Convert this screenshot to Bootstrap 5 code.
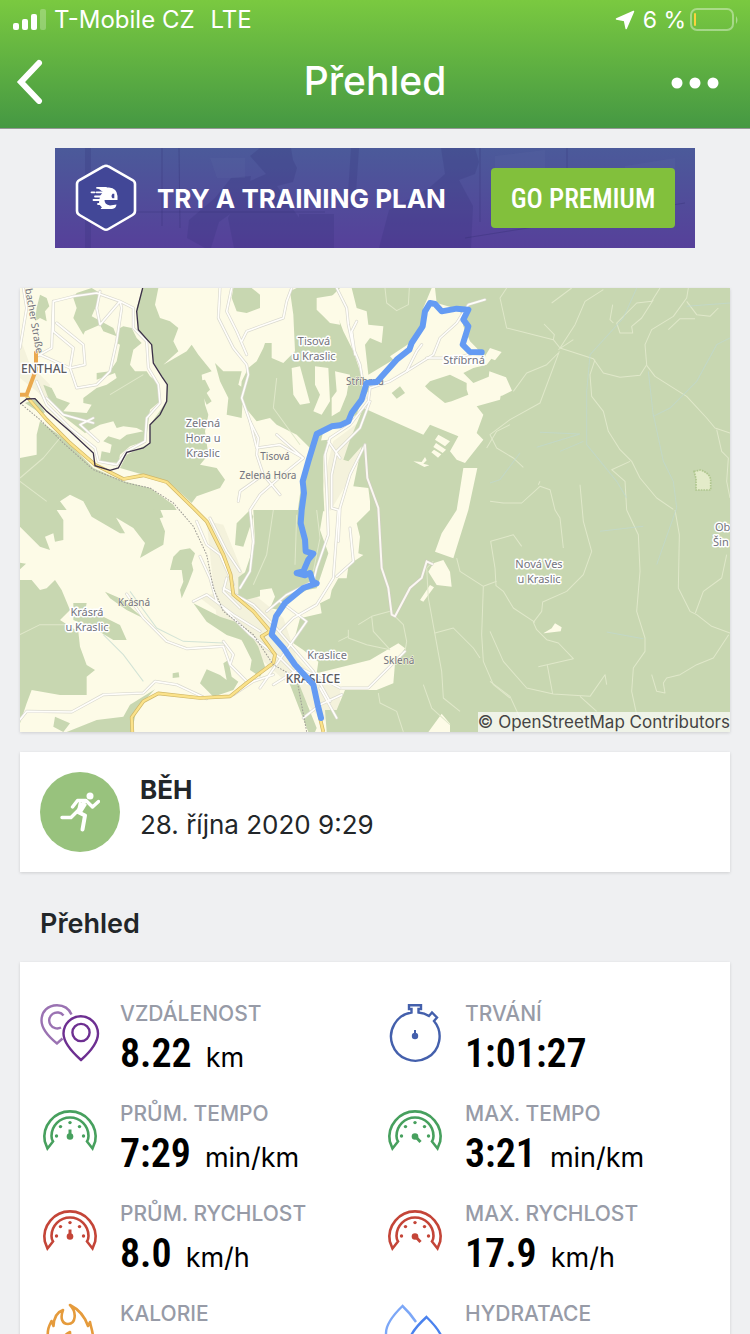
<!DOCTYPE html>
<html lang="cs">
<head>
<meta charset="utf-8">
<meta name="viewport" content="width=device-width, initial-scale=1">
<title>Přehled</title>
<link href="https://cdn.jsdelivr.net/npm/bootstrap@5.3.0/dist/css/bootstrap.min.css" rel="stylesheet">
<style>
body{font-family:Inter,"Noto Sans",sans-serif;background:#eff0f2;color:#222629}
.app-header{background:linear-gradient(#7ac940,#459843);border-bottom:1px solid #949896;color:#fff}
.status-bar{height:40px;font-size:24px;line-height:42px;padding:0 12px}
.status-end{font-size:23px}
.nav-row{height:88px;padding:0 28px 6px 16px}
.nav-title{font-size:39px;line-height:48px;font-weight:500}
.icon-btn{background:none;border:0;padding:0;color:#fff;line-height:0}
.side{width:52px}
.side-back{width:64px}
.scroll-area{scrollbar-width:none}
.scroll-area::-webkit-scrollbar{display:none}
.promo{max-width:640px;height:100px;background:linear-gradient(#4b5a9a,#56409a);overflow:hidden}
.promo-art{inset:0;width:100%;height:100%}
.promo-text{font-size:26px;line-height:42px;font-weight:700;color:#fff;margin-left:20px;padding-top:2px}
.btn-premium{background:#82c03c;color:#fff;border:0;border-radius:4px;width:184px;height:60px;padding:2px 0 0;font:500 27px/58px "Roboto Condensed","Liberation Sans Narrow",Roboto,sans-serif}
.btn-premium:hover{background:#75b030;color:#fff}
.panel{background:#fff;box-shadow:0 1px 3px rgba(0,0,0,.14)}
.map-panel svg{display:block;width:100%;height:auto}
.attribution{right:0;bottom:0;background:rgba(255,255,255,.7);font-size:17px;line-height:20px;color:#444}
.sport-dot{width:80px;height:80px;background:#98c27d}
.sport-title{font-size:26px;line-height:35px;font-weight:700}
.sport-date{font-size:26px;line-height:35px}
.section-title{font-size:27px;line-height:36px;font-weight:600}
.metric{height:100px;gap:20px}
.metric svg{width:60px;height:64px;flex:none;overflow:visible}
.metric dt{font-size:21px;line-height:28px;font-weight:500;color:#979ba7}
.metric dd{color:#000;line-height:52px}
.metric b{font:600 40px/52px "Roboto Condensed","Liberation Sans Narrow",Roboto,sans-serif}
.metric span{font-size:27px;margin-left:14px}
.lbl{font-family:"Noto Sans",sans-serif;fill:#73737d;stroke:#fff;stroke-width:3px;stroke-linejoin:round;paint-order:stroke;text-anchor:middle}
.l11{font-size:11px}.l10{font-size:10px}.l12{font-size:12px;font-weight:500;fill:#5c5c60}
.l-start{text-anchor:start}
.bare{stroke:#fdfbe7;stroke-width:1px}
</style>
</head>
<body>
<div class="vh-100 d-flex flex-column">
<header class="app-header flex-shrink-0">
  <div class="status-bar d-flex align-items-center justify-content-between">
    <div class="d-flex align-items-center">
      <svg width="34" height="22" viewBox="0 0 34 22" fill="#fff" aria-hidden="true"><rect x="1" y="14" width="6" height="7" rx="2"/><rect x="10" y="10" width="6" height="11" rx="2"/><rect x="19" y="5" width="6" height="16" rx="2"/><rect x="28" y="0" width="6" height="21" rx="2" opacity=".25"/></svg>
      <span class="ms-2">T-Mobile CZ</span><span class="ms-3">LTE</span>
    </div>
    <div class="status-end d-flex align-items-center">
      <svg width="20" height="20" viewBox="0 0 20 20" aria-hidden="true"><path d="M18.500 1.500 1.500 9 9.500 10.500 11.200 18.500Z" fill="#fff" stroke="#fff" stroke-width="1.500" stroke-linejoin="round"/></svg>
      <span class="ms-2 me-1">6 %</span>
      <svg width="48" height="24" viewBox="0 0 48 24" aria-hidden="true"><rect x="1" y="1" width="42" height="21" rx="6" fill="none" stroke="#fff" stroke-opacity=".38" stroke-width="2"/><path d="M46 8q3 4 0 8Z" fill="#fff" opacity=".4"/><rect x="4" y="5" width="2" height="13" rx="1" fill="#fbd33c"/></svg>
    </div>
  </div>
  <nav class="nav-row d-flex align-items-center justify-content-between" aria-label="Navigace">
    <div class="side-back"><button class="icon-btn" type="button" aria-label="Zpět"><svg width="28" height="46" viewBox="0 0 28 46"><path d="M23 6 5 25 23 44" fill="none" stroke="#fff" stroke-width="6" stroke-linecap="round" stroke-linejoin="miter" transform="translate(0 -1)"/></svg></button></div>
    <h1 class="nav-title m-0">Přehled</h1>
    <div class="side text-end"><button class="icon-btn" type="button" aria-label="Další možnosti"><svg width="52" height="14" viewBox="0 0 52 14" fill="#fff"><circle cx="7" cy="7" r="5.500"/><circle cx="25" cy="7" r="5.500"/><circle cx="43" cy="7" r="5.500"/></svg></button></div>
  </nav>
</header>

<main class="scroll-area flex-grow-1 overflow-auto px-3">
<div class="px-1">
  <section class="promo position-relative mx-auto d-flex align-items-center justify-content-between" style="margin-top:19px">
    <svg class="promo-art position-absolute" viewBox="0 0 640 100" preserveAspectRatio="none" aria-hidden="true">
      <g fill="#2c2a72" opacity=".18"><path d="M195 8 205 0h31l2 12 4 8-4 14-16 4 8 12 20 28-6 22h-65l-6-30 20-36 18-8Z"/><path d="m150 100-18-10 2-18 26-22 16-20 20-2-4 26-28 20-8 26Z"/><path d="M386 0h34l4 14-4 12-16 6 14 26-2 42h-92l10-38 40-22 16-14Z"/><path d="M30 0h6v100h-6ZM244 66h35v34h-35ZM296 0h8l-4 60h-8Z"/></g>
      <g fill="none" stroke="#2d2a6c" opacity=".3"><path d="M107 0v78M124 0l1 80M20 64h250M425 0v74M512 0v20M410 90l220-35"/></g>
      <g fill="#6673a6" opacity=".16"><path d="M155 10h35v20h-28ZM440 8l50-6v30h-50ZM570 18l50-8v40h-50Z"/></g>
    </svg>
    <div class="position-relative d-flex align-items-center">
      <svg width="62" height="70" viewBox="0 0 62 70" style="margin-left:20px" aria-hidden="true">
        <path d="M28.500 3.500q2.500-1.500 5 0l24 13.500q2.500 1.500 2.500 4v27q0 2.500-2.500 4l-24 14q-2.500 1.500-5 0l-24-14q-2.500-1.500-2.500-4V21q0-2.500 2.500-4Z" fill="#424797" stroke="#fff" stroke-width="2.600"/>
        <path d="M22 24.500H34Q42 25 42.500 33V37H29.500Q29.500 41.500 35 42.500L41.500 41.500Q41 45.500 37 46H26Q25 45 27 44.500 24 42 24 39.500L25 33 28 29Z" fill="#fff"/>
        <path d="M22 24.800h9M16.500 29.300h3M21.500 29.300h9M20 33.500h9M18.500 37h9M23 41h6" fill="none" stroke="#fff" stroke-width="1.800" stroke-linecap="round"/>
        <path d="M37.500 30.800h1.800v4.500h-1.800q-2-2.200 0-4.500Z" fill="#424797"/>
      </svg>
      <span class="promo-text">TRY A TRAINING PLAN</span>
    </div>
    <button class="btn btn-premium position-relative" style="margin-right:20px" type="button">GO PREMIUM</button>
  </section>

  <figure class="panel map-panel position-relative mb-0 overflow-hidden" style="margin-top:40px">
  <svg viewBox="0 0 710 444" role="img" aria-label="Mapa trasy">
    <rect width="710" height="444" fill="#fdfbe7"/>
    <g transform="scale(.33334)">
    <defs>
      <g id="roads">
        <path d="M10 0 20 60 0 180M100 40 95 180 50 205M240 10 230 60 240 110 300 40 230 15 160 25 100 40 100 130 160 180 150 240 60 200M110 105 190 170 195 230 150 240 170 300 230 290 270 250 290 160 305 60 300 40 340 60 340 120 380 160 385 240 415 290 420 345 380 390 375 460 320 490 290 530 235 520 225 480 150 420 80 350 50 280"/>
        <path d="M220 405 130 380 80 330M235 460 180 410 220 390M600 0 595 90 640 180 680 230 685 260 665 330 690 400 715 450 710 500 730 560 660 610 655 640M635 0 620 70 650 130 680 200M665 160 680 130 720 115 790 90 800 40 815 0"/>
        <path d="M950 0 980 60 985 110 1000 180 1020 230 1030 290 1035 330M1005 200 995 130 1010 100M1395 35 1345 50 1310 105 1260 150 1240 200 1160 250 1110 280 1050 300 1045 340 990 410 930 450 915 500 920 600 925 740 890 840 880 880 800 920 740 970"/>
        <path d="M1160 250 1190 190 1205 170M1050 340 1020 420 950 490 935 560 935 660 955 666 940 870 890 950 820 990 780 1030M925 460 960 510M1220 210 1310 210 1380 190"/>
        <path d="M1035 470 990 560 960 660 955 760M690 400 710 480 780 470 850 510 800 550 720 620 690 666 700 760 690 850 660 900M770 440 850 510M730 560 780 620M950 865 1000 820 990 720"/>
        <path d="M0 1295 20 1270 155 1272 250 1220 370 1215 405 1180 470 1190 560 1232M320 918 370 990 440 1060 500 1082 610 1075 630 1130 680 1180M610 1060 640 1100 630 1130"/>
        <path d="M530 700 560 770 600 800 640 890M570 690 620 790 660 850M540 805 570 870 590 940 690 1040 780 1110 850 1180M520 940 560 920 640 980 720 1030M610 900 700 950 760 1010 820 1080 880 1150 930 1240M660 960 610 910 620 870M780 940 860 1000 720 1200M760 1190 840 1140 960 1200M850 1290 900 1250 965 1220M900 1200 950 1290"/>
        <path d="M965 1200 1045 1200 1155 1090M640 1220 700 1180 760 1160"/>
      </g>
      <g id="yellow"><path d="M20 325 80 395 150 465 225 530 310 573 370 562 440 582 520 660 560 700 610 800 632 860 640 920 700 970 755 1035 825 1130 880 1190 900 1290 910 1332"/><path d="M337 1332 335 1288 370 1240 415 1216 540 1230 630 1225 680 1185 760 1125 765 1100 725 1045 750 1030"/></g>
    </defs>
    <path d="m0 150 30 80 60 60-10 50-30-30-50-40Zm560 550 50 10 80 200 100 80 40 120 50 50 50 60-40 60-50-60-120-110-130-120Zm380-240 80-60 20 60-50 110-60 100-20-90ZM540 930l60-20 20 80ZM880 1180l80 20 0 60-50 40Z" fill="#f0edd5" opacity=".65"/>
    <g fill="#c8d7b1">
      <path d="m60 20 20 10 8 25-13 15 5 30-20-10-15 10 5-40ZM170 15l45-15 25 15-10 35-15 35 65 35 10 25-40-15-10-20-45 20-5 10-30-50 10-30-10-30Z"/>
      <path d="m310 115 25 5 15 30 15 15-25 20-10 45 15 20h35l10 15 25 20 5 55-30 25-10 75-5 20-45 15-30 25-5 25-55-5 5-30 25 5 5-25-25-10 15-15 35 10 20-15 50-10-20-10-40-5-20 5-10-20-40 10-45 25-65-50-20-20-25-35-15-40 25 10 15 30 40 15-20 25 70 5 15-25-25-5v-15l40-30 30-10 30-20-5-15-55 20v-20l40-5 20-30 10-50-10-5 10-45Z"/>
      <path d="m368 0h47l-10 50 15 40 30 10 25 20-15 40 15 30-45 40 70-40 15-20 20 30 40 50-30 10 10 90 10 30-10 50 10 70-25 30 50 10 25 35-15 25-70 25-15 20-55-50-30-20-60-15-70-20 20-40 70-35v-55l50-70v-55l-40-60-5-55-40-45-5-65Z"/>
      <path d="m585 225 25 25h55l-10 40 15 10-5 90-45-10 5-50-25-50ZM640 0h55l25 20v40l-40 15-30-5-15-40ZM530 280l25-5 15 30-10 10 15 25-15 10ZM15 345l35-12 25 40-10 5Z"/>
      <path d="m60 400 70 50 90 90 90 40 80 20 70 50 10 16H240l-50-26-40-20-30 20 20 26-30 0 20 30 0 60-25 5-5-25-25 10 15 40-30-10-60-60V510l50-10V440Z"/>
      <path d="M190 640h70l55 96h-15l-85-50ZM240 660h160l15 20 20 50-5 40-35 20-35 20 15-45-35-45Z"/>
      <path d="m0 876 35-0 25 30 20-5 25-25 20 30 25 60-30 30 55 35 5 45 20 55 25 15-25 20v55h-80l-85-15-15 40-20 60ZM0 824l18 3-18 17ZM480 786l30-5 15 15-10 30 5 20-15 40-20 45-5-25 10-25-5-35h-35l10-40ZM520 946l80 40 60 20 30 30 25 40 20 60-15 30-30-20 5-30-30-60-45-15-60-40ZM255 911l45 20 70 60-50-25-50-35ZM160 945l40 0-4 20 54 21 50 25 20 45h-40l-50-30-70-30ZM560 1144l40 17 20 15-10-50 15-10 10 50 20 15-15 25-60 20-40-40ZM405 1204l-55 60-15 68H140l0 0 90-36 80-10 20-36ZM105 1286l45 20-20 26-30-16ZM650 706l40-40 10 20-30 90-25-5ZM400 666l20-3 10 25-20 5ZM458 1156l18-3 2 15-20 2Z"/>
      <path d="m710 220 20-40 5-15h20v45l35 15 35-35-5-110-10-70 20-10h130l-40 40 20 50 15 0 15 40 30 60 20 60 30 50-30 50-10 30-100 50-10 40-30 10-40-40-60-30-20-20-40 10-50-60 5-60 20-40ZM995 0h240l-25 60-10 70-30 35-60 40 10 10-75 45-10-90 15-20 35 15 5-50-45-5-5-40-30-10Z"/>
      <path d="M1245 0H2130V1332H920l-5-66 35 0 25-60 95 0 50-20 5-60 30-45-20-15-85 50-160 40 5-35-45-35-30-20 20-75 65-15-5-30 30-15 5-25 20-35 25 0 5-35 15-15 30-20-15-5 5-50-10-40 40-40v-26l-5-40-45-5 25-120-40 45-15-5 20-60 40-95 180 80 20-30 85 35-25 45 20 25 25 10 55-70-20-20 20-55-20-25 70-20 5-30-35-40-50 20-30-30 30-15 40-10 20-25h-30l-20-25-20-20-20-45-10-50-70-20Z"/>
      <path d="M715 666h195l-10 60 25 70-35 105-30 5-50 30-30 30-30-5 15-35-10-25-35 5-65 22 0-60 20-15 30-90-5-97ZM875 460l50-5-15 50v100l3 65h-80l15-110ZM1230 280l60-20 50 25 0 20 5 15-50 20-20 5-50-40-10-10ZM1115 315l25-20 15 20-25 17ZM810 1190l20-20 60 150-5 12h-20ZM645 925l75-50 0 50-40 10Z"/>
    </g>
    <g fill="#fdfbe7">
      <path d="M1330 540h42l-27 126-45 145-55-20 20-55 45-70ZM1240 826l30-10 20 35 5 45-45-5-25-40ZM1230 891l12 7-32 43-10-5ZM1255 440l35 20-15 15-30-20ZM1248 465l30 20-10 10-28-18ZM1242 485l22 14-10 10-20-16ZM1180 520l25 2 10-15 5 10-10 10 18 5-15 5ZM1225 1332l40-55 25 30v25ZM1410 180l35 12-20 25-30-12ZM1408 250l50 18 18 40-30 15-46 5ZM1570 1036l25-15 10-15 20 12-3 12-50 6Z"/>
      <path d="m815 240 25-5 30 110-30 5-20-30ZM885 235l40 5 5 100-25 40-25-10 20-50-15-30ZM945 250l45 10-10 60-20 50-25 15v-55l15-20ZM890 30l60-10 10 90-30-5-20-20-20-20Z"/>
      <path d="m2022 550 20-4q28 10 30 30v30h-44v-34Z" fill="#e3ebc9" stroke="#afc68e" stroke-width="5" stroke-dasharray="5 3"/>
    </g>
    <g fill="none" stroke="#e0e8ca" stroke-width="3" stroke-linejoin="round">
      <path d="M1460 0 1440 30 1460 120 1600 155 1620 180 1720 212 1750 255 1800 268 1860 262 1880 230 1875 170 1895 125 1960 85 2000 30 2005 0M1620 180 1665 110 1695 40 1750 5M1600 155 1603 140 1572 108M1615 185 1660 155M1618 190 1560 345 1470 395 1410 440 1430 480 1480 510 1510 538M1615 195 1580 230 1520 255 1480 310M1725 215 1710 260 1715 325 1750 370 1765 430 1800 485 1835 520 1860 570 1910 630 1960 664M1830 520 1775 545 1815 580 1820 666"/>
      <path d="M1880 232 1905 265 2000 325 2060 390 2085 420 2130 435M2090 425 2105 490 2125 510 2120 580 2130 630M2000 40 2030 80 2070 85 2095 60M1945 125 1980 92 2025 92M1920 0 1895 40 1850 45 1790 105 1800 135 1838 135 1835 115 1865 90 1900 35M1780 105 1770 95 1778 50M1655 0 1595 45"/>
      <path d="M1410 640 1450 645 1505 645 1560 595 1590 605 1605 666 1620 690 1630 780M1555 590 1560 580M1680 590 1690 700 1715 790 1690 860 1640 910 1568 942 1565 970 1540 1003 1550 1025 1580 1055 1615 1065 1660 1112 1555 1136M1545 1003 1480 960 1450 910 1428 893 1425 840 1412 760 1480 740 1505 775M1582 1132 1598 1218M1410 1030 1450 1120 1520 1200 1600 1218 1710 1225 1755 1160 1760 1190M1410 1180 1470 1225 1500 1290M1680 1225 1730 1270"/>
      <path d="M1820 666 1855 740 1860 850 1850 970 1875 1050 1875 1090 1840 1140 1835 1210 1850 1280M1965 666 1978 740 1975 900 2010 970 2030 980 2075 1015 2130 1035M2026 975 2050 910 2105 870 2120 800M2126 1040 2080 1110 2030 1130 1980 1160 1940 1170 1930 1185 1935 1215 1910 1210 1895 1160"/>
      <path d="M1240 820 1220 840 1225 930 1245 1040 1265 1150 1270 1230 1320 1270M1310 810 1320 850 1390 895 1385 1040 1390 1120 1420 1190 1470 1230M1390 895 1430 880M1245 1035 1300 1020 1360 1080 1380 1110M1055 985 1110 970 1150 1010 1160 1060 1155 1090M1110 1085 1060 1030 1055 985 1015 1010M985 1025 985 1050 1040 1070 1110 1085M955 1060 985 1045M1075 1215 1080 1245 1130 1270 1150 1332M1210 1190 1235 1260 1290 1310M1095 0 1100 45 1130 68 1165 50 1168 0M1470 410 1430 430 1400 480"/>
      <path d="M830 680 825 830M760 666 740 800 700 890M890 666 900 750 880 850M770 270 760 360 840 470"/>
      <path d="m0 570 70-60 50-60M0 580l80 60M270 320l100-60M0 1040l60-30h80"/>
    </g>
    <g fill="none" stroke="#c0d8cf" stroke-width="3" opacity=".7"><path d="m1850 0-40 90-100 110-10 110 0 160 90 110 30 50M2130 150l-40 20-60 110-80 80-50 25-15-135M1900 380l30 140 30 60 10 80-60 170M2130 45l-130 10M1410 585l30-10 60-80M1550 478l130-40-120-5M1620 490l70-30M1740 730l130-15M1760 1032l110 20M330 910l80 110 80 40 120 5M250 1040l60 60 60 80"/></g>
    <use href="#roads" fill="none" stroke="#dad9cf" stroke-width="9" stroke-linejoin="round" stroke-linecap="round"/>
    <use href="#roads" fill="none" stroke="#fffefb" stroke-width="5" stroke-linejoin="round" stroke-linecap="round"/>
    <path d="M1035 470 1042 570 1075 660 1085 840 1105 900 1115 980 1125 985 1170 900 1205 870 1220 820 1240 830" fill="none" stroke="#cfcbc0" stroke-width="9"/><path d="M1035 470 1042 570 1075 660 1085 840 1105 900 1115 980 1125 985 1170 900 1205 870 1220 820 1240 830" fill="none" stroke="#fbf8f2" stroke-width="6"/>
    <use href="#yellow" fill="none" stroke="#cfb767" stroke-width="11" stroke-linejoin="round"/>
    <use href="#yellow" fill="none" stroke="#fbe28a" stroke-width="7" stroke-linejoin="round"/>
    <path d="M48 190v55l-28 75H0" fill="none" stroke="#eaa94e" stroke-width="12"/>
    <path d="M0 345 60 395 130 465 220 545 320 585 390 600 460 645 520 715 560 800 580 900 610 970 700 1040 760 1130 830 1170 860 1332" fill="none" stroke="#9d9b95" stroke-width="3" stroke-dasharray="5 4"/>
    <path d="M368 0 350 70 355 125 395 170 400 225 425 265 442 290 440 340 420 380 390 410 390 465 370 480 320 493 295 540 270 547 225 533 220 495 150 430 80 370 45 332 20 333 0 348" fill="none" stroke="#3b3149" stroke-width="4"/>
    </g>
    <g class="lbl l11">
      <text x="294" y="57">Tisová</text><text x="294" y="72">u Kraslic</text>
      <text x="183" y="139">Zelená</text><text x="183" y="154">Hora u</text><text x="183" y="169">Kraslic</text>
      <text x="444" y="76">Stříbrná</text>
      <text x="67" y="328">Krásrá</text><text x="67" y="343">u Kraslic</text>
      <text x="519" y="280">Nová Ves</text><text x="519" y="295">u Kraslic</text>
      <text x="307" y="371">Kraslice</text>
      <text class="l-start" x="695" y="243">Ob</text><text class="l-start" x="693" y="258">Šin</text>
    </g>
    <g class="lbl l10 bare"><text x="345" y="97">Stříbrná</text><text x="255" y="172">Tisová</text><text x="248" y="191">Zelená Hora</text><text x="114" y="318">Krásná</text><text x="379" y="376">Sklená</text>
      <text transform="translate(5 1) rotate(80)" class="l-start">bacher Straße</text></g>
    <g class="lbl l12"><text x="24" y="85">ENTHAL</text><text x="293" y="395">KRASLICE</text></g>
    <path transform="scale(.33334)" d="M1385 193 1350 192 1328 170 1345 115 1330 95 1345 65 1310 62 1265 70 1245 48 1230 45 1215 70 1208 115 1175 165 1168 185 1130 215 1070 282 1040 285 1025 335 995 375 985 400 960 412 935 415 890 438 865 520 848 580 852 615 845 666 842 706 855 755 857 790 880 797 865 815 850 850 830 855 855 862 870 855 878 880 890 886 850 900 795 945 768 985 755 1040 790 1080 825 1130 880 1190 893 1250 903 1290" fill="none" stroke="#649bf3" stroke-width="18" stroke-linejoin="round" stroke-linecap="round"/>
  </svg>
  <a class="attribution position-absolute text-decoration-none" href="#">© OpenStreetMap Contributors</a>
  </figure>

  <section class="panel d-flex" style="margin-top:20px;padding:20px;gap:20px">
    <div class="sport-dot rounded-circle d-flex align-items-center justify-content-center flex-shrink-0">
      <svg width="40" height="40" viewBox="0 0 40 40" fill="none" stroke="#fff" stroke-linecap="round" stroke-linejoin="round" aria-hidden="true"><circle cx="30" cy="4" r="3.500" fill="#fff" stroke="none"/><path d="m12.500 15 5-6.500H26l6.500 6.500 6-5.500M2 25.500h9l10-10" stroke-width="3.400"/><path d="m25 9-7 11 7 3.500-2.500 14" stroke-width="4"/><path d="m19 9.500 8 3-5 8-5-2Z" fill="#fff" stroke="none"/></svg>
    </div>
    <div><h2 class="sport-title m-0">BĚH</h2><time class="sport-date d-block" datetime="2020-10-28T09:29">28. října 2020 9:29</time></div>
  </section>

  <h2 class="section-title mb-0" style="margin-top:34px;margin-left:20px">Přehled</h2>

  <svg width="0" height="0" class="position-absolute" aria-hidden="true"><defs>
    <g id="gauge" fill="none" stroke="currentColor" stroke-width="2.600"><path d="M7.500 48.500 4.800 41.500A25.600 25.600 0 1 1 55.200 41.500L52.500 48.500 47 41.500Q48.500 39 48.500 36A18.500 18.500 0 0 0 11.500 36Q11.500 39 13 41.500Z" stroke-linejoin="miter"/><g fill="currentColor" stroke="none"><circle cx="16.500" cy="36" r="1.700"/><circle cx="20.500" cy="26.600" r="1.700"/><circle cx="30" cy="22.600" r="1.700"/><circle cx="39.500" cy="26.600" r="1.700"/><circle cx="43.500" cy="36" r="1.700"/><circle cx="30" cy="36.500" r="3.300"/></g></g>
  </defs></svg>

  <dl class="panel row g-0 mb-4" style="margin-top:20px;padding:38px 0 20px 20px">
    <div class="col-6 d-flex metric">
      <svg viewBox="0 0 60 64" fill="none" stroke-width="2.400" aria-hidden="true"><g stroke="#9a72b2"><path d="M31.500 14.500C29 8.500 24 5.200 17 5.200 8 5.200 1.500 11.500 1.500 20.500 1.500 29 9 37 17 43.500L22.500 38.500"/><path d="M23.500 15.500a8 8 0 1 0-2.500 12"/></g><g stroke="#6d2f91"><path d="M41 60C32 52 23.500 43 23.500 33.500a17.200 17.200 0 0 1 34.500 0C58 43 50 52 41 60Z"/><circle cx="41" cy="32.500" r="8.600"/></g></svg>
      <div><dt>VZDÁLENOST</dt><dd class="m-0"><b>8.22</b><span>km</span></dd></div></div>
    <div class="col-6 d-flex metric">
      <svg viewBox="0 0 60 64" fill="none" stroke="#4460ac" stroke-width="2.400" aria-hidden="true"><path d="M33.500 12.500q6 .5 10.500 3.500l3-3.500 5 5-3 3.500a24.300 24.300 0 1 1-22.500-8.500v-3.500h-2.500V5.300h12v3.700h-2.500Z"/><circle cx="30" cy="36" r="3.200" fill="#4460ac" stroke="none"/><path d="M30 36v-6" stroke-width="2"/></svg>
      <div><dt>TRVÁNÍ</dt><dd class="m-0"><b>1:01:27</b></dd></div></div>
    <div class="col-6 d-flex metric"><svg viewBox="0 0 60 64" color="#47a05e" aria-hidden="true"><use href="#gauge"/><path d="M30 36v-6.500" stroke="currentColor" stroke-width="3"/></svg>
      <div><dt>PRŮM. TEMPO</dt><dd class="m-0"><b>7:29</b><span>min/km</span></dd></div></div>
    <div class="col-6 d-flex metric"><svg viewBox="0 0 60 64" color="#47a05e" aria-hidden="true"><use href="#gauge"/><path d="m30 36 5.500 6" stroke="currentColor" stroke-width="3"/></svg>
      <div><dt>MAX. TEMPO</dt><dd class="m-0"><b>3:21</b><span>min/km</span></dd></div></div>
    <div class="col-6 d-flex metric"><svg viewBox="0 0 60 64" color="#c44538" aria-hidden="true"><use href="#gauge"/><path d="M30 36v-6.500" stroke="currentColor" stroke-width="3"/></svg>
      <div><dt>PRŮM. RYCHLOST</dt><dd class="m-0"><b>8.0</b><span>km/h</span></dd></div></div>
    <div class="col-6 d-flex metric"><svg viewBox="0 0 60 64" color="#c44538" aria-hidden="true"><use href="#gauge"/><path d="m30 36 5.500 6" stroke="currentColor" stroke-width="3"/></svg>
      <div><dt>MAX. RYCHLOST</dt><dd class="m-0"><b>17.9</b><span>km/h</span></dd></div></div>
    <div class="col-6 d-flex metric">
      <svg viewBox="0 0 60 64" fill="none" stroke="#e59b3c" stroke-width="2.600" stroke-linejoin="round" aria-hidden="true"><path d="M8 38C7 30 9 26 11.500 21l2 5C14 17 17 12 23 10c-3 8-1 14 5 14 8 0 9-12 2-19 8 4 15 12 18 21l2-4c1 6 3 9 3 16 0 14-9 22-22 22S8 52 8 38Z"/><path d="M22 43q1-8 8-11 0 8 5 10"/></svg>
      <div><dt>KALORIE</dt></div></div>
    <div class="col-6 d-flex metric">
      <svg viewBox="0 0 60 64" fill="none" stroke-width="2.400" aria-hidden="true"><path d="M31 22Q25 13 17.500 6 1 22 1 33q0 9 10 13" stroke="#7ca7f7"/><path d="M41.500 17Q24 33 24 43a17 17 0 0 0 34 0Q58 33 41.500 17Z" stroke="#4a82ee"/></svg>
      <div><dt>HYDRATACE</dt></div></div>
  </dl>
</div>
</main>
</div>
<script src="https://cdn.jsdelivr.net/npm/bootstrap@5.3.0/dist/js/bootstrap.bundle.min.js"></script>
</body>
</html>
